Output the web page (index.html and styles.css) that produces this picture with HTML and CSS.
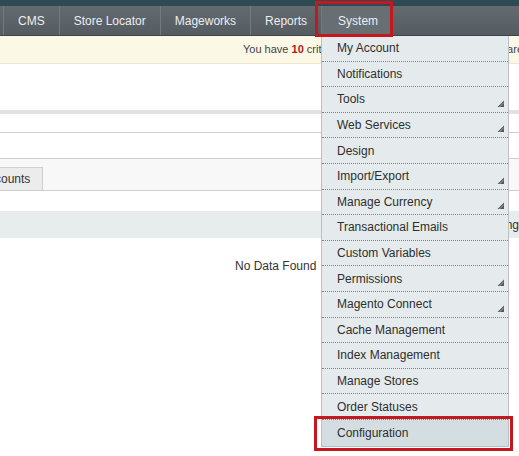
FILE: index.html
```html
<!DOCTYPE html>
<html>
<head>
<meta charset="utf-8">
<link rel="stylesheet" href="styles.css">
</head>
<body>
<div class="page">
  <div class="topstrip"></div>
  <nav class="nav">
    <span class="nav-item">CMS</span>
    <span class="nav-item">Store Locator</span>
    <span class="nav-item">Mageworks</span>
    <span class="nav-item">Reports</span>
    <span class="nav-item active">System</span>
  </nav>
  <div class="notice">
    <span class="notice-main">You have <b>10</b> critical, 35 major, 88 minor and 214 notice unread message(s).</span>
    <span class="notice-end">Messages are</span>
  </div>
  <div class="header-space"></div>
  <div class="shadow-band"></div>
  <div class="blank-row"></div>
  <div class="line-row"></div>
  <div class="tabs"><span class="tab">Accounts</span></div>
  <div class="gap-row"></div>
  <div class="grid-head"><span>Filtering</span></div>
  <div class="no-data">No Data Found</div>

  <ul class="menu">
    <li class="menu-item">My Account</li>
    <li class="menu-item">Notifications</li>
    <li class="menu-item sub">Tools<svg class="arr" width="7" height="7" viewBox="0 0 7 7"><polygon points="0.5,7 7,0.5 7,7" fill="#55595c"/><line x1="2.5" y1="7" x2="7" y2="2.5" stroke="#b4babd" stroke-width="0.7"/></svg></li>
    <li class="menu-item sub">Web Services<svg class="arr" width="7" height="7" viewBox="0 0 7 7"><polygon points="0.5,7 7,0.5 7,7" fill="#55595c"/><line x1="2.5" y1="7" x2="7" y2="2.5" stroke="#b4babd" stroke-width="0.7"/></svg></li>
    <li class="menu-item">Design</li>
    <li class="menu-item sub">Import/Export<svg class="arr" width="7" height="7" viewBox="0 0 7 7"><polygon points="0.5,7 7,0.5 7,7" fill="#55595c"/><line x1="2.5" y1="7" x2="7" y2="2.5" stroke="#b4babd" stroke-width="0.7"/></svg></li>
    <li class="menu-item sub">Manage Currency<svg class="arr" width="7" height="7" viewBox="0 0 7 7"><polygon points="0.5,7 7,0.5 7,7" fill="#55595c"/><line x1="2.5" y1="7" x2="7" y2="2.5" stroke="#b4babd" stroke-width="0.7"/></svg></li>
    <li class="menu-item">Transactional Emails</li>
    <li class="menu-item">Custom Variables</li>
    <li class="menu-item sub">Permissions<svg class="arr" width="7" height="7" viewBox="0 0 7 7"><polygon points="0.5,7 7,0.5 7,7" fill="#55595c"/><line x1="2.5" y1="7" x2="7" y2="2.5" stroke="#b4babd" stroke-width="0.7"/></svg></li>
    <li class="menu-item sub">Magento Connect<svg class="arr" width="7" height="7" viewBox="0 0 7 7"><polygon points="0.5,7 7,0.5 7,7" fill="#55595c"/><line x1="2.5" y1="7" x2="7" y2="2.5" stroke="#b4babd" stroke-width="0.7"/></svg></li>
    <li class="menu-item">Cache Management</li>
    <li class="menu-item">Index Management</li>
    <li class="menu-item">Manage Stores</li>
    <li class="menu-item">Order Statuses</li>
    <li class="menu-item current">Configuration</li>
  </ul>

  <div class="mark mark-system"></div>
  <div class="mark mark-config"></div>
</div>
</body>
</html>
```

FILE: styles.css
```css
* { box-sizing: border-box; }
html, body { margin: 0; padding: 0; background: #fff; }
body {
  font-family: "Liberation Sans", Arial, sans-serif;
  font-size: 12px;
  color: #333;
}
.page {
  position: relative;
  width: 519px;
  height: 456px;
  overflow: hidden;
}
.topstrip {
  height: 6px;
  background: #2e4a53;
}
.nav {
  display: flex;
  height: 30px;
  padding-left: 3px;
  background: linear-gradient(#636a70, #545b61);
  border-bottom: 1px solid #3e4448;
}
.nav-item {
  display: flex;
  align-items: center;
  padding: 1px 14px 0;
  border-left: 1px solid #737a80;
  color: #eceef0;
  font-size: 12px;
  white-space: nowrap;
}
.nav-item.active {
  background: #676e74;
  padding: 1px 15px 0 16px;
}
.notice {
  display: flex;
  height: 28px;
  padding-left: 243px;
  line-height: 27px;
  background: #fcf8e6;
  border-bottom: 1px solid #efe6c8;
  color: #444;
  font-size: 11px;
  white-space: nowrap;
  overflow: hidden;
}
.notice-main {
  flex: 1;
  min-width: 0;
  overflow: hidden;
}
.notice-end {
  flex-shrink: 0;
  margin-right: -4px;
}
.notice b { color: #b0171d; }
.header-space { height: 46px; }
.shadow-band {
  height: 4px;
  background: #e2e2e2;
}
.blank-row { height: 18px; }
.line-row {
  height: 26px;
  border-top: 1px solid #cfcfcf;
}
.tabs {
  display: flex;
  align-items: flex-end;
  height: 33px;
  background: #f8f8f8;
  border-top: 1px solid #cfcfcf;
  border-bottom: 1px solid #cfcfcf;
}
.tab {
  height: 23px;
  line-height: 22px;
  padding: 0 12px 0 8px;
  margin-left: -28px;
  background: #ececec;
  border: 1px solid #cfcfcf;
  border-bottom: none;
  color: #333;
}
.gap-row { height: 20px; }
.grid-head {
  display: flex;
  justify-content: flex-end;
  align-items: center;
  height: 27px;
  background: #e7eded;
  color: #333;
  overflow: hidden;
  white-space: nowrap;
}
.no-data {
  margin-top: 17px;
  padding-left: 235px;
  line-height: 22px;
  color: #333;
}
.menu {
  position: absolute;
  left: 321px;
  top: 36px;
  width: 188px;
  margin: 0;
  padding: 0;
  list-style: none;
  background: #e5ebed;
  border: 1px solid #b9c1c5;
  border-top: none;
}
.menu-item {
  display: flex;
  align-items: center;
  justify-content: space-between;
  height: 25.6px;
  padding: 0 4px 0 15px;
  border-bottom: 1px dotted #7d8387;
  color: #2e2e2e;
  font-size: 12px;
  white-space: nowrap;
}
.menu-item:last-child { border-bottom: none; }
.menu-item .arr {
  align-self: flex-end;
  margin-bottom: 5px;
}
.menu-item.current { background: #d4dee2; }
.mark {
  position: absolute;
  border: 3px solid #c5171e;
}
.mark-system {
  left: 315px;
  top: 1px;
  width: 78px;
  height: 36px;
}
.mark-config {
  left: 314px;
  top: 416px;
  width: 199px;
  height: 35px;
}
```
